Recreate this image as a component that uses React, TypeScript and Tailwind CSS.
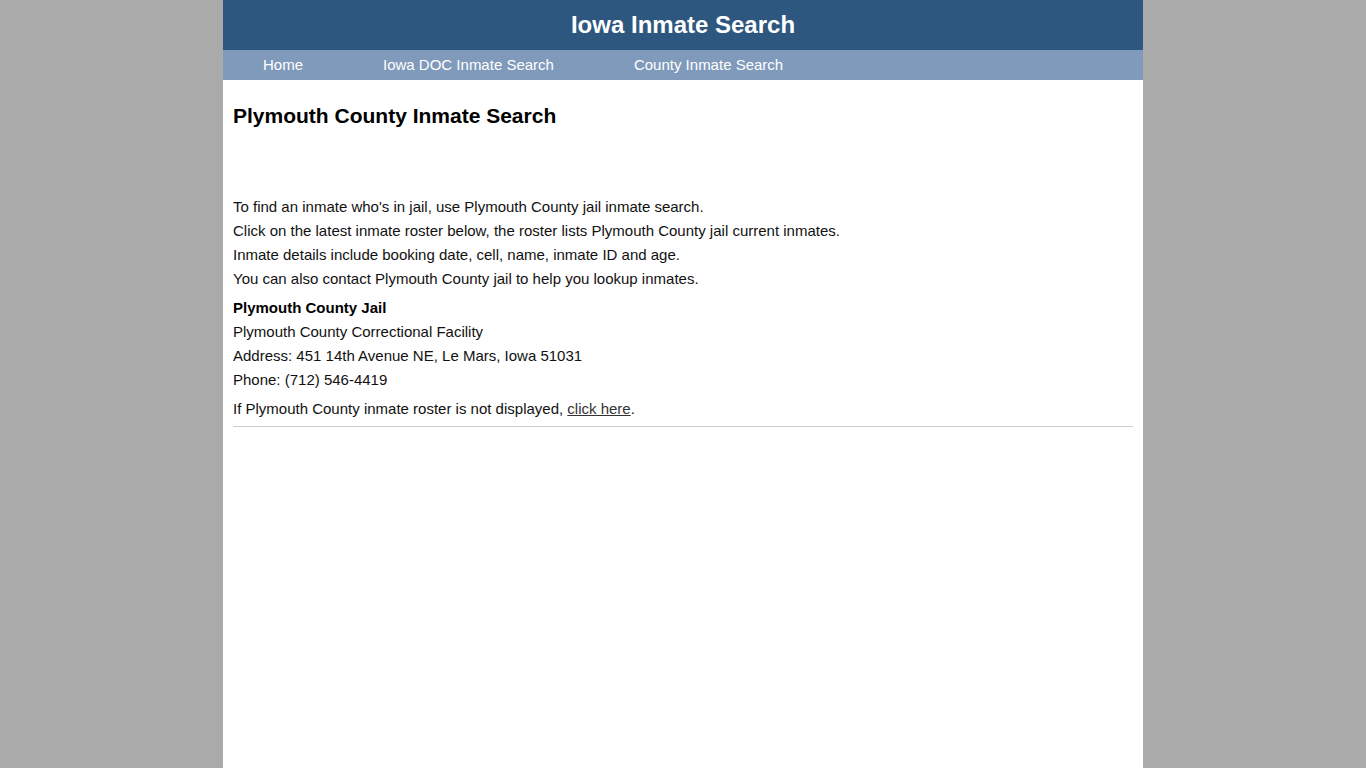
export default function App() {
  const font = { fontFamily: '"Liberation Sans", Arial, sans-serif' };
  return (
    <div className="min-h-screen bg-[#aaaaaa]" style={font}>
      <div className="mx-auto w-[920px] min-h-screen bg-white">
        <header className="h-[50px] bg-[#2e5780] flex items-center justify-center">
          <h1 className="text-[24px] font-bold text-white leading-none">Iowa Inmate Search</h1>
        </header>
        <nav className="h-[30px] bg-[#7f9aba] flex items-center">
          <a className="px-10 text-[15px] text-white leading-[30px]" href="#">Home</a>
          <a className="px-10 text-[15px] text-white leading-[30px]" href="#">Iowa DOC Inmate Search</a>
          <a className="px-10 text-[15px] text-white leading-[30px]" href="#">County Inmate Search</a>
        </nav>
        <main className="px-[10px] pt-[24px] text-[15px] text-[#111] leading-[24px]">
          <h2 className="text-[21px] font-bold leading-[24px] text-black">Plymouth County Inmate Search</h2>
          <div className="mt-[67px]">
            <p>To find an inmate who's in jail, use Plymouth County jail inmate search.</p>
            <p>Click on the latest inmate roster below, the roster lists Plymouth County jail current inmates.</p>
            <p>Inmate details include booking date, cell, name, inmate ID and age.</p>
            <p>You can also contact Plymouth County jail to help you lookup inmates.</p>
          </div>
          <div className="mt-[5px]">
            <p className="font-bold text-black">Plymouth County Jail</p>
            <p>Plymouth County Correctional Facility</p>
            <p>Address: 451 14th Avenue NE, Le Mars, Iowa 51031</p>
            <p>Phone: (712) 546-4419</p>
          </div>
          <p className="mt-[5px]">
            If Plymouth County inmate roster is not displayed,{" "}
            <a href="#" className="underline text-[#333]">click here</a>.
          </p>
          <hr className="mt-[5px] border-0 border-t border-[#cccccc]" />
        </main>
      </div>
    </div>
  );
}
